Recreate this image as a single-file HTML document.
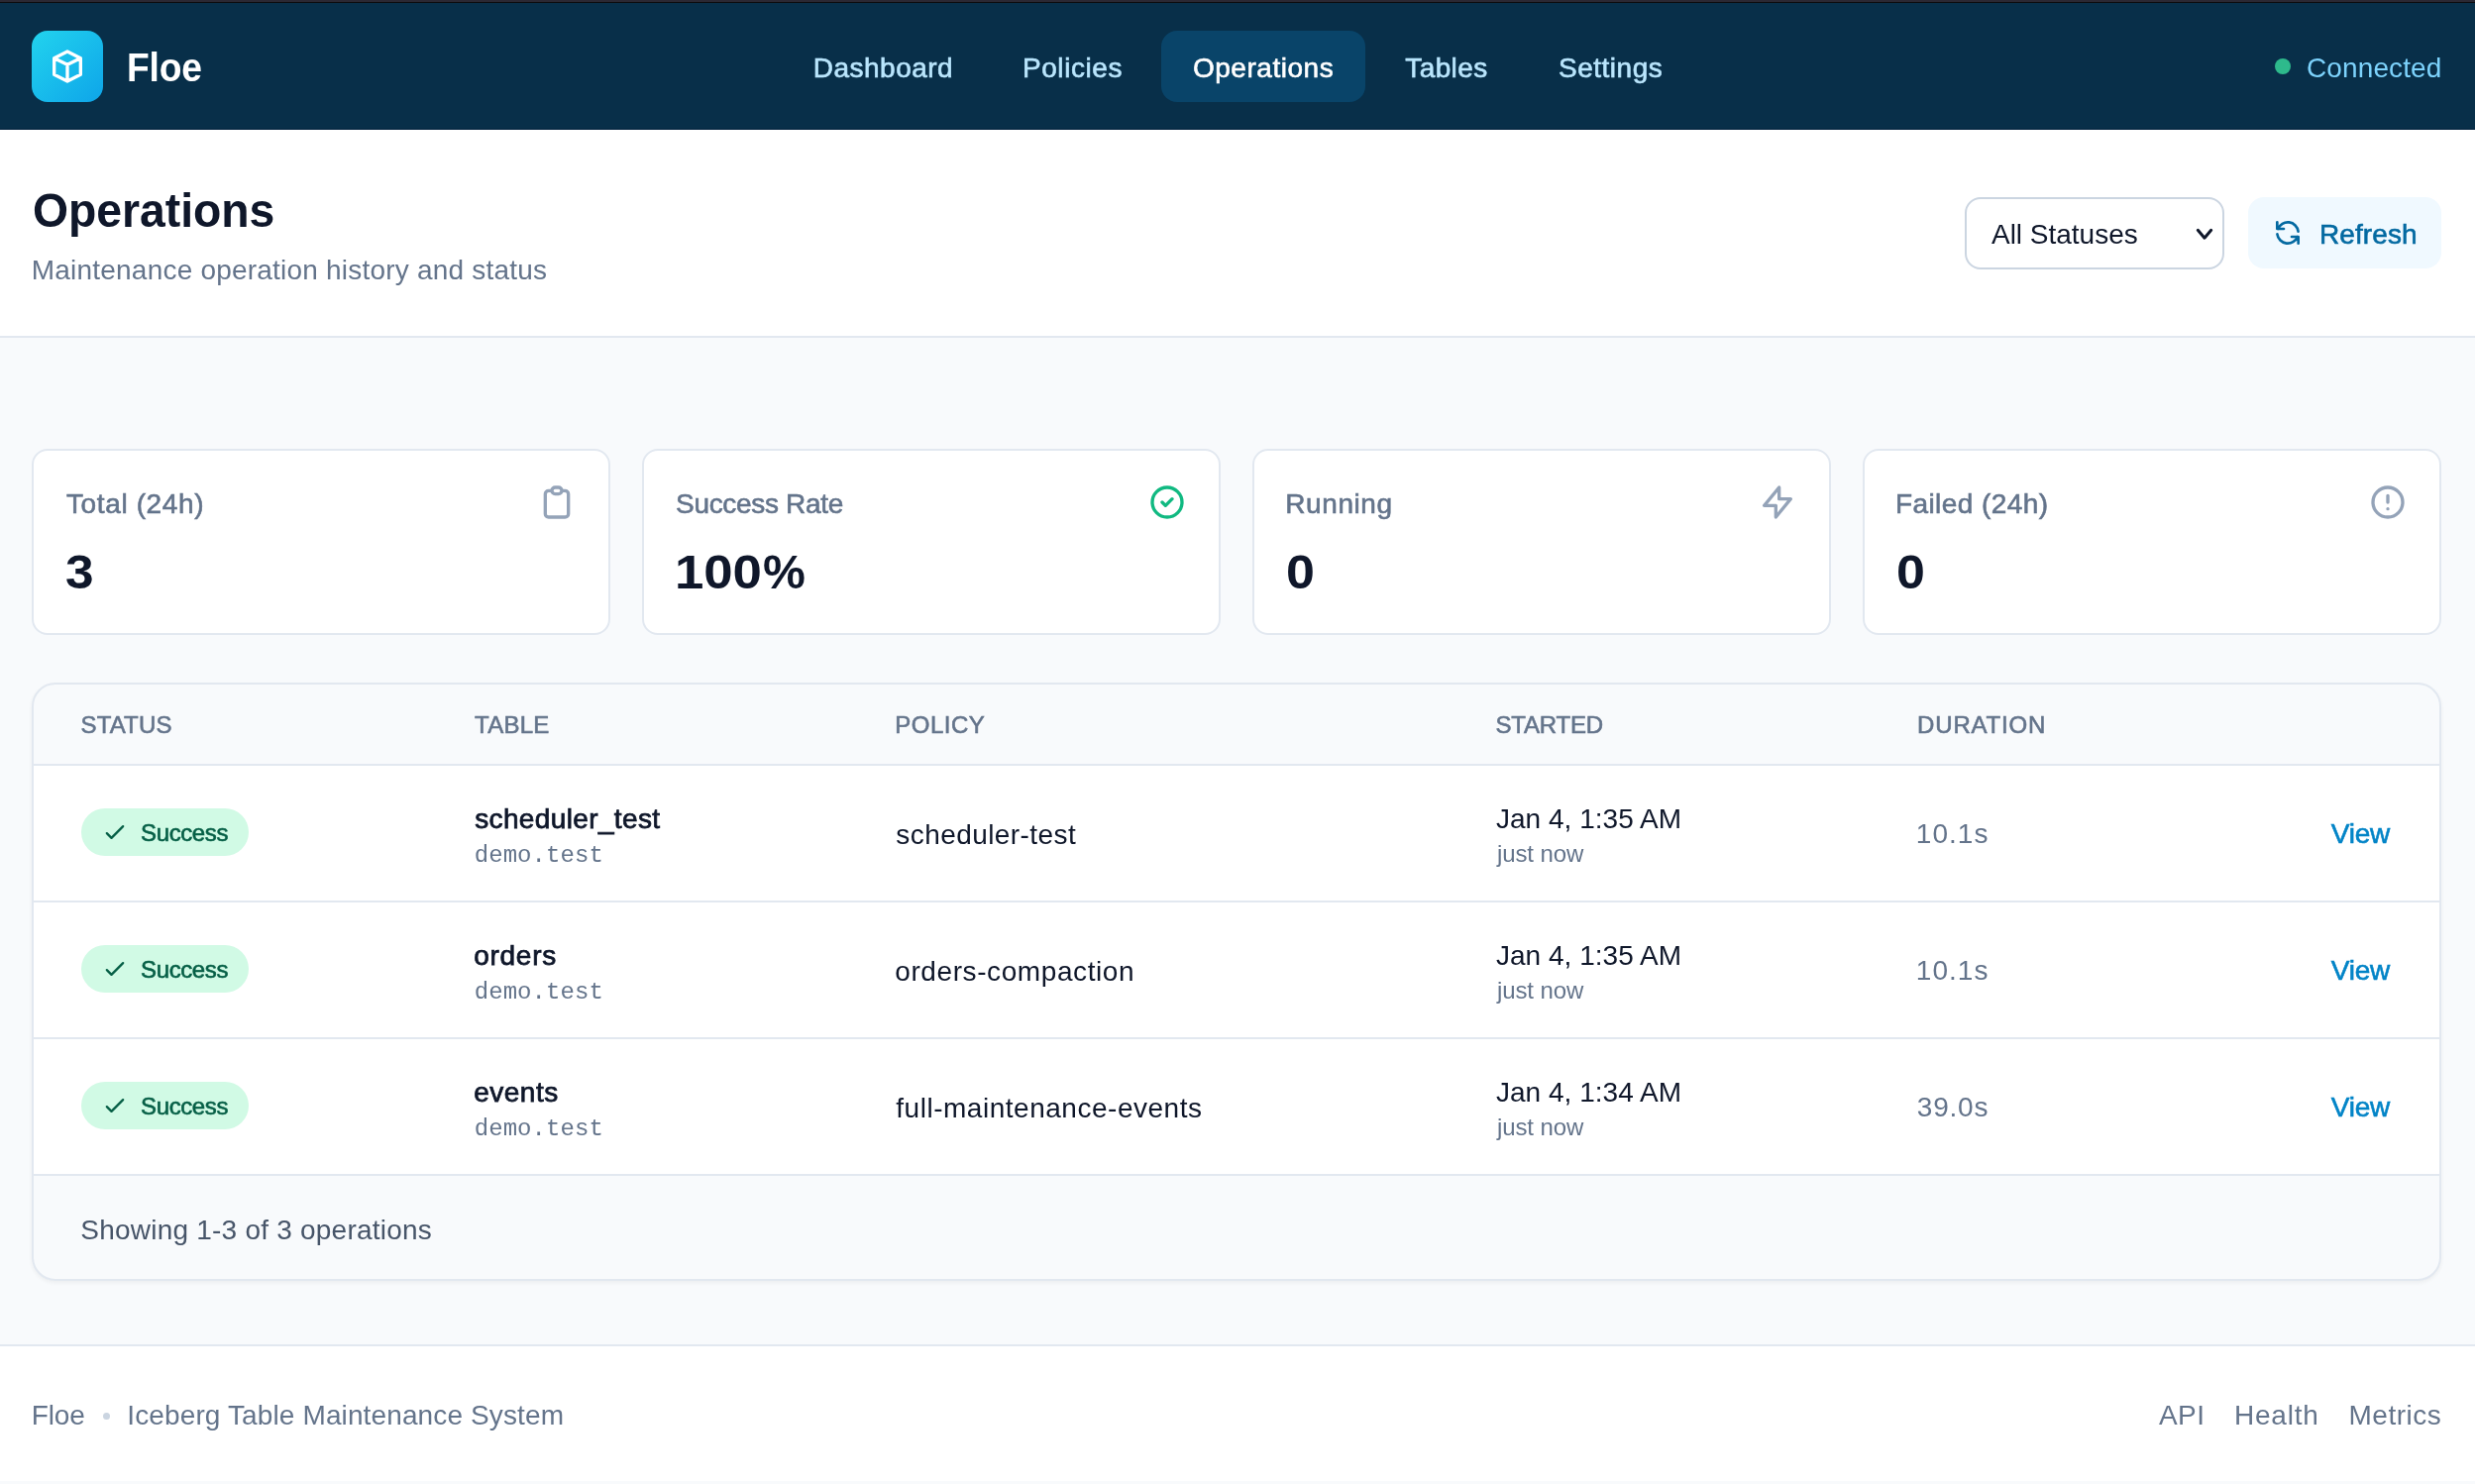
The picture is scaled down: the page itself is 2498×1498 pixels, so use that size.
<!DOCTYPE html>
<html lang="en">
<head>
<meta charset="utf-8">
<title>Floe - Operations</title>
<style>
*{box-sizing:border-box;margin:0;padding:0}
html,body{width:2498px;height:1498px;overflow:hidden;background:#f8fafc;font-family:"Liberation Sans",sans-serif}
.a{position:absolute}
.t{position:absolute;white-space:nowrap;display:block;font-family:"Liberation Sans",sans-serif;font-weight:400}
.m{font-family:"Liberation Mono",monospace}
svg{position:absolute;overflow:visible}
.ic{fill:none;stroke-linecap:round;stroke-linejoin:round;stroke-width:2}
.card{position:absolute;top:453px;width:584px;height:188px;background:#fff;border:2px solid #e2e8f0;border-radius:16px}
.hl{position:absolute;left:34px;width:2428px;height:2px;background:#e2e8f0}
.row{position:absolute;left:34px;width:2428px;height:136px;background:#fff}
.badge{position:absolute;left:82px;width:169px;height:48px;border-radius:24px;background:#d1fae5}
</style>
</head>
<body>
<!-- top chrome strip -->
<div class="a" style="left:0;top:0;width:2498px;height:2px;background:#2b2833"></div>
<div class="a" style="left:0;top:2px;width:2498px;height:1px;background:#0c0b0e"></div>
<!-- nav -->
<div class="a" style="left:0;top:3px;width:2498px;height:128px;background:#082f49"></div>
<div class="a" style="left:0;top:130px;width:2498px;height:1px;background:#02213d"></div>
<div class="a" style="left:32px;top:31px;width:72px;height:72px;border-radius:16px;background:linear-gradient(135deg,#22d3ee 0%,#0ea5e9 100%)"></div>
<svg class="ic" style="left:48px;top:47px" width="40" height="40" viewBox="0 0 24 24" stroke="#fff"><path d="M20 7l-8-4-8 4m16 0l-8 4m8-4v10l-8 4m0-10L4 7m8 4v10M4 7v10l8 4"/></svg>
<div class="a" style="left:1172px;top:31px;width:206px;height:72px;border-radius:16px;background:#094469"></div>
<div class="a" style="left:2296px;top:59px;width:16px;height:16px;border-radius:8px;background:#2eba8c"></div>
<!-- page header -->
<div class="a" style="left:0;top:131px;width:2498px;height:208px;background:#fff"></div>
<div class="a" style="left:0;top:339px;width:2498px;height:2px;background:#e2e8f0"></div>
<div class="a" style="left:1983px;top:199px;width:262px;height:73px;border:2px solid #cbd5e1;border-radius:16px;background:#fff"></div>
<svg style="left:2210px;top:225px" width="30" height="24" viewBox="0 0 30 24"><path d="M8.3 7.3L15 15.2L21.7 7.3" fill="none" stroke="#0f172a" stroke-width="3" stroke-linecap="round" stroke-linejoin="round"/></svg>
<div class="a" style="left:2269px;top:199px;width:195px;height:72px;border-radius:16px;background:#f0f9ff"></div>
<svg class="ic" style="left:2293px;top:219px" width="32" height="32" viewBox="0 0 24 24" stroke="#0369a1"><path d="M4 4v5h.582m15.356 2A8.001 8.001 0 004.582 9m0 0H9m11 11v-5h-.581m0 0a8.003 8.003 0 01-15.357-2m15.357 2H15"/></svg>
<!-- cards -->
<div class="card" style="left:32px"></div>
<div class="card" style="left:648px"></div>
<div class="card" style="left:1264px"></div>
<div class="card" style="left:1880px"></div>
<svg class="ic" style="left:542px;top:487px" width="40" height="40" viewBox="0 0 24 24" stroke="#94a3b8"><path d="M9 5H7a2 2 0 00-2 2v12a2 2 0 002 2h10a2 2 0 002-2V7a2 2 0 00-2-2h-2M9 5a2 2 0 002 2h2a2 2 0 002-2M9 5a2 2 0 012-2h2a2 2 0 012 2"/></svg>
<svg class="ic" style="left:1158px;top:487px" width="40" height="40" viewBox="0 0 24 24" stroke="#10b981"><path d="M9 12l2 2 4-4m6 2a9 9 0 11-18 0 9 9 0 0118 0z"/></svg>
<svg class="ic" style="left:1774px;top:487px" width="40" height="40" viewBox="0 0 24 24" stroke="#94a3b8"><path d="M13 10V3L4 14h7v7l9-11h-7z"/></svg>
<svg class="ic" style="left:2390px;top:487px" width="40" height="40" viewBox="0 0 24 24" stroke="#94a3b8"><path d="M12 8v4m0 4h.01M21 12a9 9 0 11-18 0 9 9 0 0118 0z"/></svg>
<!-- table -->
<div class="a" style="left:32px;top:689px;width:2432px;height:604px;border:2px solid #e2e8f0;border-radius:24px;background:#f8fafc;box-shadow:0 2px 4px rgba(0,0,0,0.05)"></div>
<div class="hl" style="top:771px"></div>
<div class="row" style="top:773px"></div>
<div class="hl" style="top:909px"></div>
<div class="row" style="top:911px"></div>
<div class="hl" style="top:1047px"></div>
<div class="row" style="top:1049px"></div>
<div class="hl" style="top:1185px"></div>
<div class="badge" style="top:816px"></div>
<svg class="ic" style="left:102px;top:826px" width="28" height="28" viewBox="0 0 24 24" stroke="#065f46"><path d="M5 13l4 4L19 7"/></svg>
<div class="badge" style="top:954px"></div>
<svg class="ic" style="left:102px;top:964px" width="28" height="28" viewBox="0 0 24 24" stroke="#065f46"><path d="M5 13l4 4L19 7"/></svg>
<div class="badge" style="top:1092px"></div>
<svg class="ic" style="left:102px;top:1102px" width="28" height="28" viewBox="0 0 24 24" stroke="#065f46"><path d="M5 13l4 4L19 7"/></svg>
<!-- footer -->
<div class="a" style="left:0;top:1357px;width:2498px;height:2px;background:#e2e8f0"></div>
<div class="a" style="left:0;top:1359px;width:2498px;height:136px;background:#fff"></div>
<div class="a" style="left:104px;top:1426px;width:7px;height:7px;border-radius:4px;background:#cbd5e1"></div>
<div id="tx" style="position:absolute;left:0;top:0;width:2498px;height:1498px;will-change:transform">
<span class="t" style="left:128.14px;top:48.00px;font-size:40px;line-height:40px;color:#ffffff;letter-spacing:-0.162px;transform-origin:0 0;transform:scaleX(0.9300);font-weight:700;">Floe</span>
<span class="t" style="left:820.80px;top:54.50px;font-size:28px;line-height:28px;color:#bae6fd;letter-spacing:0.487px;-webkit-text-stroke:0.6px #bae6fd;">Dashboard</span>
<span class="t" style="left:1032.00px;top:54.50px;font-size:28px;line-height:28px;color:#bae6fd;letter-spacing:0.560px;-webkit-text-stroke:0.6px #bae6fd;">Policies</span>
<span class="t" style="left:1203.90px;top:54.50px;font-size:28px;line-height:28px;color:#ffffff;letter-spacing:0.537px;-webkit-text-stroke:0.6px #ffffff;">Operations</span>
<span class="t" style="left:1418.30px;top:54.50px;font-size:28px;line-height:28px;color:#bae6fd;letter-spacing:0.393px;-webkit-text-stroke:0.6px #bae6fd;">Tables</span>
<span class="t" style="left:1573.10px;top:54.50px;font-size:28px;line-height:28px;color:#bae6fd;letter-spacing:0.490px;-webkit-text-stroke:0.6px #bae6fd;">Settings</span>
<span class="t" style="left:2328.00px;top:54.50px;font-size:28px;line-height:28px;color:#7dd3fc;letter-spacing:0.117px;">Connected</span>
<span class="t" style="left:33.13px;top:188.90px;font-size:48px;line-height:48px;color:#0f172a;letter-spacing:-0.025px;transform-origin:0 0;transform:scaleX(0.9650);font-weight:700;">Operations</span>
<span class="t" style="left:31.80px;top:258.50px;font-size:28px;line-height:28px;color:#64748b;letter-spacing:0.208px;">Maintenance operation history and status</span>
<span class="t" style="left:2010.00px;top:223.00px;font-size:28px;line-height:28px;color:#0f172a;letter-spacing:-0.013px;">All Statuses</span>
<span class="t" style="left:2340.90px;top:223.00px;font-size:28px;line-height:28px;color:#0369a1;letter-spacing:0.105px;-webkit-text-stroke:0.6px #0369a1;">Refresh</span>
<span class="t" style="left:67.00px;top:495.00px;font-size:28px;line-height:28px;color:#64748b;letter-spacing:0.624px;-webkit-text-stroke:0.6px #64748b;">Total (24h)</span>
<span class="t" style="left:682.10px;top:495.00px;font-size:28px;line-height:28px;color:#64748b;letter-spacing:-0.325px;-webkit-text-stroke:0.6px #64748b;">Success Rate</span>
<span class="t" style="left:1297.30px;top:495.00px;font-size:28px;line-height:28px;color:#64748b;letter-spacing:0.578px;-webkit-text-stroke:0.6px #64748b;">Running</span>
<span class="t" style="left:1912.90px;top:495.00px;font-size:28px;line-height:28px;color:#64748b;letter-spacing:0.429px;-webkit-text-stroke:0.6px #64748b;">Failed (24h)</span>
<span class="t" style="left:65.63px;top:553.50px;font-size:48px;line-height:48px;color:#0f172a;letter-spacing:0.000px;transform-origin:0 0;transform:scaleX(1.0708);font-weight:700;">3</span>
<span class="t" style="left:680.50px;top:553.50px;font-size:48px;line-height:48px;color:#0f172a;letter-spacing:-0.104px;transform-origin:0 0;transform:scaleX(1.1000);font-weight:700;">100</span>
<span class="t" style="left:770.10px;top:553.50px;font-size:48px;line-height:48px;color:#0f172a;letter-spacing:0.000px;transform-origin:0 0;transform:scaleX(1.0049);font-weight:700;">%</span>
<span class="t" style="left:1297.92px;top:553.50px;font-size:48px;line-height:48px;color:#0f172a;letter-spacing:0.000px;transform-origin:0 0;transform:scaleX(1.0833);font-weight:700;">0</span>
<span class="t" style="left:1913.92px;top:553.50px;font-size:48px;line-height:48px;color:#0f172a;letter-spacing:0.000px;transform-origin:0 0;transform:scaleX(1.0833);font-weight:700;">0</span>
<span class="t" style="left:81.60px;top:720.20px;font-size:24px;line-height:24px;color:#64748b;letter-spacing:0.139px;-webkit-text-stroke:0.6px #64748b;">STATUS</span>
<span class="t" style="left:479.10px;top:720.20px;font-size:24px;line-height:24px;color:#64748b;letter-spacing:0.214px;-webkit-text-stroke:0.6px #64748b;">TABLE</span>
<span class="t" style="left:903.30px;top:720.20px;font-size:24px;line-height:24px;color:#64748b;letter-spacing:0.475px;-webkit-text-stroke:0.6px #64748b;">POLICY</span>
<span class="t" style="left:1509.50px;top:720.20px;font-size:24px;line-height:24px;color:#64748b;letter-spacing:-0.210px;-webkit-text-stroke:0.6px #64748b;">STARTED</span>
<span class="t" style="left:1935.10px;top:720.20px;font-size:24px;line-height:24px;color:#64748b;letter-spacing:0.826px;-webkit-text-stroke:0.6px #64748b;">DURATION</span>
<span class="t" style="left:142.10px;top:828.70px;font-size:24px;line-height:24px;color:#065f46;letter-spacing:-0.401px;-webkit-text-stroke:0.6px #065f46;">Success</span>
<span class="t" style="left:479.18px;top:813.20px;font-size:28px;line-height:28px;color:#0f172a;letter-spacing:0.371px;-webkit-text-stroke:0.75px #0f172a;">scheduler_test</span>
<span class="t m" style="left:478.70px;top:851.50px;font-size:24px;line-height:24px;color:#64748b;letter-spacing:0.073px;">demo.test</span>
<span class="t" style="left:904.30px;top:828.70px;font-size:28px;line-height:28px;color:#0f172a;letter-spacing:0.432px;">scheduler-test</span>
<span class="t" style="left:1510.00px;top:813.20px;font-size:28px;line-height:28px;color:#0f172a;letter-spacing:0.023px;">Jan 4, 1:35 AM</span>
<span class="t" style="left:1511.00px;top:849.50px;font-size:24px;line-height:24px;color:#64748b;letter-spacing:-0.102px;">just now</span>
<span class="t" style="left:1933.80px;top:828.30px;font-size:28px;line-height:28px;color:#64748b;letter-spacing:1.026px;">10.1s</span>
<span class="t" style="left:2352.70px;top:828.30px;font-size:28px;line-height:28px;color:#0284c7;letter-spacing:-0.188px;-webkit-text-stroke:0.6px #0284c7;">View</span>
<span class="t" style="left:142.10px;top:966.70px;font-size:24px;line-height:24px;color:#065f46;letter-spacing:-0.401px;-webkit-text-stroke:0.6px #065f46;">Success</span>
<span class="t" style="left:478.18px;top:951.20px;font-size:28px;line-height:28px;color:#0f172a;letter-spacing:0.737px;-webkit-text-stroke:0.75px #0f172a;">orders</span>
<span class="t m" style="left:478.70px;top:989.50px;font-size:24px;line-height:24px;color:#64748b;letter-spacing:0.073px;">demo.test</span>
<span class="t" style="left:903.30px;top:966.70px;font-size:28px;line-height:28px;color:#0f172a;letter-spacing:0.587px;">orders-compaction</span>
<span class="t" style="left:1510.00px;top:951.20px;font-size:28px;line-height:28px;color:#0f172a;letter-spacing:0.023px;">Jan 4, 1:35 AM</span>
<span class="t" style="left:1511.00px;top:987.50px;font-size:24px;line-height:24px;color:#64748b;letter-spacing:-0.102px;">just now</span>
<span class="t" style="left:1933.80px;top:966.30px;font-size:28px;line-height:28px;color:#64748b;letter-spacing:1.026px;">10.1s</span>
<span class="t" style="left:2352.70px;top:966.30px;font-size:28px;line-height:28px;color:#0284c7;letter-spacing:-0.188px;-webkit-text-stroke:0.6px #0284c7;">View</span>
<span class="t" style="left:142.10px;top:1104.70px;font-size:24px;line-height:24px;color:#065f46;letter-spacing:-0.401px;-webkit-text-stroke:0.6px #065f46;">Success</span>
<span class="t" style="left:478.18px;top:1089.20px;font-size:28px;line-height:28px;color:#0f172a;letter-spacing:0.511px;-webkit-text-stroke:0.75px #0f172a;">events</span>
<span class="t m" style="left:478.70px;top:1127.50px;font-size:24px;line-height:24px;color:#64748b;letter-spacing:0.073px;">demo.test</span>
<span class="t" style="left:904.30px;top:1104.70px;font-size:28px;line-height:28px;color:#0f172a;letter-spacing:0.520px;">full-maintenance-events</span>
<span class="t" style="left:1510.00px;top:1089.20px;font-size:28px;line-height:28px;color:#0f172a;letter-spacing:0.023px;">Jan 4, 1:34 AM</span>
<span class="t" style="left:1511.00px;top:1125.50px;font-size:24px;line-height:24px;color:#64748b;letter-spacing:-0.102px;">just now</span>
<span class="t" style="left:1934.80px;top:1104.30px;font-size:28px;line-height:28px;color:#64748b;letter-spacing:0.776px;">39.0s</span>
<span class="t" style="left:2352.70px;top:1104.30px;font-size:28px;line-height:28px;color:#0284c7;letter-spacing:-0.188px;-webkit-text-stroke:0.6px #0284c7;">View</span>
<span class="t" style="left:81.30px;top:1227.50px;font-size:28px;line-height:28px;color:#475569;letter-spacing:0.224px;">Showing 1-3 of 3 operations</span>
<span class="t" style="left:31.70px;top:1414.50px;font-size:28px;line-height:28px;color:#64748b;letter-spacing:-0.132px;">Floe</span>
<span class="t" style="left:128.30px;top:1414.50px;font-size:28px;line-height:28px;color:#64748b;letter-spacing:0.125px;">Iceberg Table Maintenance System</span>
<span class="t" style="left:2178.90px;top:1414.50px;font-size:28px;line-height:28px;color:#64748b;letter-spacing:0.524px;">API</span>
<span class="t" style="left:2255.00px;top:1414.50px;font-size:28px;line-height:28px;color:#64748b;letter-spacing:0.787px;">Health</span>
<span class="t" style="left:2370.50px;top:1414.50px;font-size:28px;line-height:28px;color:#64748b;letter-spacing:0.513px;">Metrics</span>
</div>
</body>
</html>
